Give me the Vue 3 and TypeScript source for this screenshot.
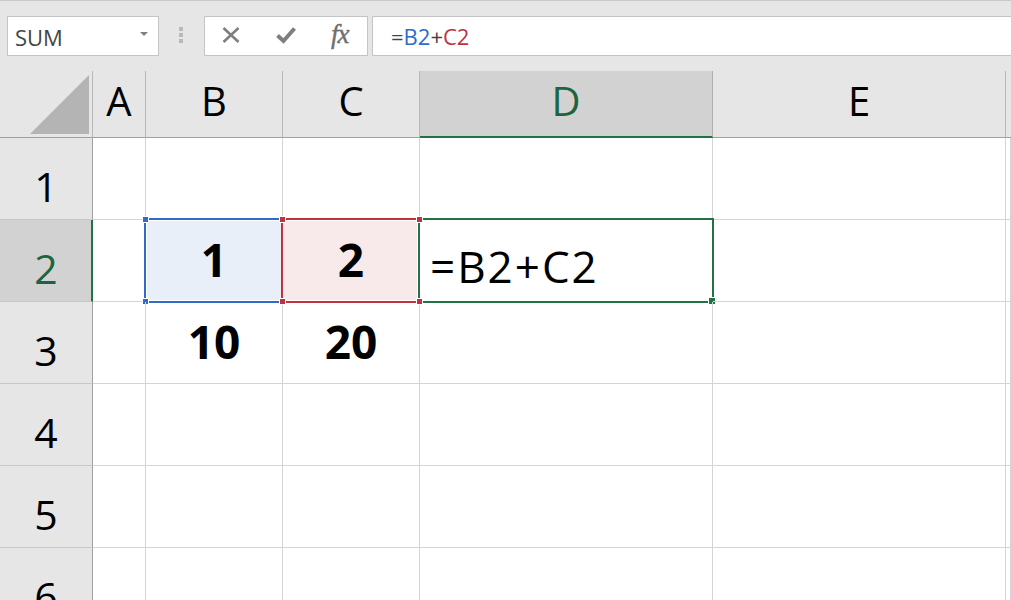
<script setup lang="ts">
interface Cell {
  text?: string
  kind?: string
  range?: string
}
const columns: string[] = ['A', 'B', 'C', 'D', 'E', '']
const blank = (): Cell[] => [{}, {}, {}, {}, {}, {}]
const rows: Cell[][] = [
  blank(),
  [{}, { text: '1', kind: 'num blue', range: 'range-b' }, { text: '2', kind: 'num red', range: 'range-c' }, { text: '=B2+C2', kind: 'formula', range: 'range-d' }, {}, {}],
  [{}, { text: '10', kind: 'num' }, { text: '20', kind: 'num' }, {}, {}, {}],
  blank(),
  blank(),
  blank(),
]
</script>

<template>
  <div class="app">
    <div class="toolbar">
      <div class="name-box">
        <span class="name-text">SUM</span>
        <span class="caret"></span>
      </div>
      <div class="grip"><i></i><i></i><i></i></div>
      <div class="buttons">
        <svg class="ic-x" width="18" height="16" viewBox="0 0 18 16">
          <path d="M1.5 1 L16.5 15 M16.5 1 L1.5 15" stroke="#7f7f7f" stroke-width="2.6" fill="none" />
        </svg>
        <svg class="ic-check" width="20" height="18" viewBox="0 0 20 18">
          <path d="M1.5 9.5 L7.5 15 L18.5 2.5" stroke="#7f7f7f" stroke-width="4" fill="none" />
        </svg>
        <span class="fx">fx</span>
      </div>
      <div class="formula-bar">
        <span class="eq">=</span><span class="ref-b">B2</span><span class="eq">+</span><span class="ref-c">C2</span>
      </div>
    </div>

    <div class="sheet">
      <div class="corner">
        <svg width="59" height="59" viewBox="0 0 59 59"><path d="M59 0 V59 H0 Z" fill="#b4b4b4" /></svg>
      </div>
      <div
        v-for="c in columns"
        :key="c"
        class="col-head"
        :class="{ active: c === 'D', blank: c === '' }"
      >{{ c }}</div>

      <template v-for="(row, r) in rows" :key="r">
        <div class="row-head" :class="{ active: r === 1 }">{{ r + 1 }}</div>
        <div v-for="(cell, i) in row" :key="i" class="cell" :class="cell.kind">
          {{ cell.text }}
          <div v-if="cell.range" class="range" :class="cell.range">
            <i class="h tl"></i><i class="h bl"></i>
            <i class="h tr"></i><i class="h br"></i>
            <i class="handle"></i>
          </div>
        </div>
      </template>
    </div>
  </div>
</template>

<style>
html,
body {
  margin: 0;
  background: #fff;
}
</style>

<style scoped>
.app {
  width: 1011px;
  height: 600px;
  overflow: hidden;
  font-family: "Open Sans", "Noto Sans", sans-serif;
  color: #000;
}
.toolbar {
  box-sizing: border-box;
  height: 71px;
  background: #e6e6e6;
  border-top: 1px solid #c9c9c9;
  padding: 15px 0 0 7px;
  display: flex;
  align-items: flex-start;
}
.name-box {
  box-sizing: border-box;
  width: 152px;
  height: 40px;
  background: #fff;
  border: 1px solid #c4c4c4;
  display: flex;
  align-items: center;
  justify-content: space-between;
  padding: 0 10px 0 7px;
}
.name-text {
  font-size: 22px;
  color: #444;
  line-height: 40px;
  padding-top: 1px;
}
.caret {
  width: 0;
  height: 0;
  border-left: 4px solid transparent;
  border-right: 4px solid transparent;
  border-top: 4px solid #808080;
  margin-top: -4px;
}
.grip {
  width: 43px;
  height: 40px;
  margin-right: 2px;
  display: flex;
  flex-direction: column;
  align-items: center;
  justify-content: center;
  gap: 2px;
  margin-top: -1px;
}
.grip i {
  width: 4px;
  height: 4px;
  background: #b9b9b9;
}
.buttons {
  box-sizing: border-box;
  width: 164px;
  height: 40px;
  background: #fff;
  border: 1px solid #c4c4c4;
  display: flex;
  align-items: center;
  padding-left: 17px;
}
.ic-x {
  margin-top: -2px;
}
.ic-check {
  margin-left: 36px;
  margin-top: -2px;
}
.fx {
  margin-left: 35px;
  font-family: "Liberation Serif", serif;
  font-style: italic;
  font-weight: 400;
  font-size: 27px;
  letter-spacing: -1px;
  color: #6f6f6f;
  -webkit-text-stroke: 0.4px #6f6f6f;
  line-height: 1;
  margin-top: -3px;
}
.formula-bar {
  box-sizing: border-box;
  margin-left: 4px;
  flex: 1;
  height: 40px;
  background: #fff;
  border: 1px solid #c4c4c4;
  border-right: 0;
  padding-left: 18px;
  font-size: 22px;
  line-height: 39px;
  color: #444;
}
.ref-b {
  color: #2f6bc7;
}
.ref-c {
  color: #c0323e;
}
.sheet {
  display: grid;
  grid-template-columns: 93px 53px 137px 137px 293px 293px 5px;
  grid-template-rows: 67px repeat(6, 82px);
  background: #fff;
}
.corner {
  box-sizing: border-box;
  background: #e6e6e6;
  border-bottom: 1px solid #a0a0a0;
  border-right: 1px solid #b8b8b8;
  padding: 4px 0 0 30px;
}
.corner svg {
  display: block;
}
.col-head {
  box-sizing: border-box;
  background: #e6e6e6;
  border-right: 1px solid #b8b8b8;
  border-bottom: 1px solid #a0a0a0;
  font-size: 40px;
  line-height: 60px;
  text-align: center;
}
.col-head.blank {
  border-right: 0;
}
.col-head.active {
  background: #d2d2d2;
  color: #1c6540;
  border-right: 1px solid #b0b0b0;
  border-bottom: 2px solid #217346;
}
.row-head {
  box-sizing: border-box;
  background: #e6e6e6;
  border-right: 1px solid #a0a0a0;
  border-bottom: 1px solid #c8c8c8;
  font-size: 41px;
  line-height: 1;
  display: flex;
  align-items: flex-end;
  justify-content: center;
  padding-bottom: 12px;
}
.row-head.active {
  background: #d2d2d2;
  color: #1c6540;
  border-right: 2px solid #217346;
  padding-left: 1px;
}
.cell {
  box-sizing: border-box;
  position: relative;
  border-right: 1px solid #d4d4d4;
  border-bottom: 1px solid #d4d4d4;
  display: flex;
  align-items: flex-end;
  justify-content: center;
  line-height: 1;
}
.num {
  font-size: 46px;
  font-weight: 700;
  padding-bottom: 19px;
}
.blue {
  background: #e8eff9;
}
.red {
  background: #f8eaea;
}
.formula {
  font-size: 44px;
  letter-spacing: 2px;
  justify-content: flex-start;
  padding: 0 0 13px 10px;
  white-space: nowrap;
}
.range {
  box-sizing: border-box;
  position: absolute;
  top: -2px;
  left: -2px;
  right: -1px;
  bottom: -2px;
  border: 2px solid;
}
.range-b {
  border-color: #2f6bc7;
  box-shadow: inset 1px 1px 0 #fff, inset 0 -1px 0 #fff;
}
.range-c {
  border-color: #c0323e;
  z-index: 2;
  border-right-color: transparent;
  box-shadow: inset -1px 1px 0 #fff, inset 0 -1px 0 #fff;
}
.range-d {
  border-color: #217346;
  right: -2px;
}
.h {
  display: none;
  position: absolute;
  box-sizing: content-box;
  width: 5px;
  height: 5px;
  border: 1px solid #fff;
  background: #2f6bc7;
}
.range-b .tl,
.range-b .bl,
.range-c .h {
  display: block;
}
.range-c .h {
  background: #c0323e;
}
.tl {
  left: -4px;
  top: -4px;
}
.bl {
  left: -4px;
  bottom: -4px;
}
.tr {
  right: -5px;
  top: -4px;
}
.br {
  right: -5px;
  bottom: -4px;
}
.handle {
  display: none;
  position: absolute;
  right: -3px;
  bottom: -3px;
  width: 6px;
  height: 6px;
  background: #217346;
  border-left: 1px solid #fff;
  border-top: 1px solid #fff;
}
.range-d .handle {
  display: block;
}
</style>
